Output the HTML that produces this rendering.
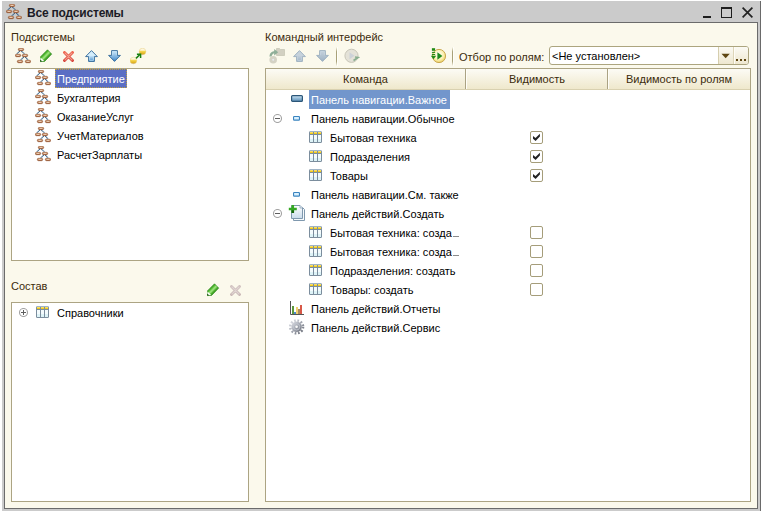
<!DOCTYPE html>
<html><head><meta charset="utf-8">
<style>
*{box-sizing:border-box}
html,body{margin:0;padding:0;width:762px;height:511px;overflow:hidden;background:#fff;font-family:"Liberation Sans",sans-serif;font-size:11px;color:#000}
.a{position:absolute}
.t{position:absolute;white-space:nowrap;line-height:13px}
#frame{left:2px;top:1px;width:758px;height:510px;background:#cbcbcb}
#frameR{left:760px;top:1px;width:1px;height:510px;background:#6a6a6a}
#panel{left:4px;top:22px;width:754px;height:487px;border:1px solid #6b6b6b;background:#fbf9ec}
.list{position:absolute;background:#fff;border:1px solid #aca483}
.hdr{position:absolute;top:69px;height:21px;background:linear-gradient(#fcfbf5,#efe8cc);border-bottom:1px solid #d9d1b0}
.sep{position:absolute;top:69px;width:1px;height:20px;background:#aaa283}
.sepl{position:absolute;top:69px;width:1px;height:20px;background:#fffef8}
.cb{position:absolute;width:13px;height:13px;border:1px solid #a59d7a;border-radius:2px;background:#fff}
</style></head><body>
<div class="a" id="frame"></div>
<div class="a" id="frameR"></div>
<div class="a" id="panel"></div>

<!-- title -->
<div class="t" style="left:27px;top:7px;font-weight:bold;font-size:12px;letter-spacing:-0.2px;color:#1b1b26">Все подсистемы</div>

<!-- window buttons -->
<div class="a" style="left:703px;top:16px;width:8px;height:2px;background:#1e1e1e"></div>
<div class="a" style="left:721px;top:7px;width:11px;height:11px;border:1px solid #1e1e1e;border-top-width:2px"></div>
<svg class="a" style="left:742px;top:7px" width="11" height="11" viewBox="0 0 11 11"><path d="M0.6 0.6L10.4 10.4M10.4 0.6L0.6 10.4" stroke="#222" stroke-width="1.7"/></svg>
<!-- left labels -->
<div class="t" style="left:11px;top:31px;color:#3b2b0b">Подсистемы</div>
<div class="list" style="left:11px;top:68px;width:238px;height:193px"></div>
<div class="t" style="left:11px;top:280px;color:#3b2b0b">Состав</div>
<div class="list" style="left:11px;top:302px;width:238px;height:200px"></div>

<!-- left list items -->
<div class="a" style="left:55px;top:69px;width:72px;height:19px;background:#5a6ec4;outline:1px dotted #c0a040;outline-offset:-1px"></div>
<div class="t" style="left:57px;top:73px;color:#fff">Предприятие</div>
<div class="t" style="left:57px;top:92px">Бухгалтерия</div>
<div class="t" style="left:57px;top:111px">ОказаниеУслуг</div>
<div class="t" style="left:57px;top:130px">УчетМатериалов</div>
<div class="t" style="left:57px;top:149px">РасчетЗарплаты</div>

<div class="t" style="left:57px;top:307px">Справочники</div>

<!-- right -->
<div class="t" style="left:265px;top:31px;color:#3b2b0b">Командный интерфейс</div>
<div class="a" style="left:336px;top:47px;width:1px;height:19px;background:linear-gradient(rgba(168,160,120,0),#a8a078 25%,#a8a078 75%,rgba(168,160,120,0))"></div>
<div class="a" style="left:337px;top:47px;width:1px;height:19px;background:#fffffa"></div>
<div class="a" style="left:452px;top:47px;width:1px;height:19px;background:linear-gradient(rgba(168,160,120,0),#a8a078 25%,#a8a078 75%,rgba(168,160,120,0))"></div>
<div class="a" style="left:453px;top:47px;width:1px;height:19px;background:#fffffa"></div>
<div class="t" style="left:459px;top:51px;color:#3b2b0b">Отбор по ролям:</div>
<div class="a" style="left:549px;top:46px;width:200px;height:19px;border:1px solid #aca57f;border-radius:3px;background:#fff;overflow:hidden">
<div class="a" style="left:168px;top:0;width:31px;height:17px;background:linear-gradient(#fbfaf4,#eee7cf)"></div>
<div class="a" style="left:168px;top:0;width:1px;height:17px;background:#d6ceae"></div>
<div class="a" style="left:183px;top:0;width:1px;height:17px;background:#ddd5b8"></div>
<div class="a" style="left:184px;top:0;width:1px;height:17px;background:#fffdf6"></div>
</div>
<svg class="a" style="left:721px;top:53px" width="10" height="6" viewBox="0 0 10 6"><path d="M0.5 0.8H8.8L4.65 5.2Z" fill="#5e4612"/></svg>
<div class="a" style="left:736px;top:59px;width:2px;height:2px;background:#5e4612"></div>
<div class="a" style="left:740px;top:59px;width:2px;height:2px;background:#5e4612"></div>
<div class="a" style="left:744px;top:59px;width:2px;height:2px;background:#5e4612"></div>
<div class="t" style="left:552px;top:50px">&lt;Не установлен&gt;</div>

<div class="list" style="left:265px;top:68px;width:486px;height:434px"></div>
<div class="hdr" style="left:266px;width:484px"></div>
<div class="sep" style="left:465px"></div>
<div class="sepl" style="left:466px"></div>
<div class="sep" style="left:607px"></div>
<div class="sepl" style="left:608px"></div>
<div class="t" style="left:343px;top:73px;color:#3b2b0b">Команда</div>
<div class="t" style="left:509px;top:73px;color:#3b2b0b">Видимость</div>
<div class="t" style="left:626px;top:73px;color:#3b2b0b">Видимость по ролям</div>

<div class="a" style="left:309px;top:90px;width:141px;height:19px;background:#7296cc"></div>
<div class="t" style="left:311px;top:94px;color:#fff">Панель навигации.Важное</div>
<div class="t" style="left:311px;top:113px">Панель навигации.Обычное</div>
<div class="t" style="left:330px;top:132px">Бытовая техника</div>
<div class="t" style="left:330px;top:151px">Подразделения</div>
<div class="t" style="left:330px;top:170px">Товары</div>
<div class="t" style="left:311px;top:189px">Панель навигации.См. также</div>
<div class="t" style="left:311px;top:208px">Панель действий.Создать</div>
<div class="t" style="left:330px;top:227px">Бытовая техника: созда</div>
<div class="a" style="left:453px;top:236px;width:6px;height:1px;background:#8c8c8c"></div>
<div class="t" style="left:330px;top:246px">Бытовая техника: созда</div>
<div class="a" style="left:453px;top:255px;width:6px;height:1px;background:#8c8c8c"></div>
<div class="t" style="left:330px;top:265px">Подразделения: создать</div>
<div class="t" style="left:330px;top:284px">Товары: создать</div>
<div class="t" style="left:311px;top:303px">Панель действий.Отчеты</div>
<div class="t" style="left:311px;top:322px">Панель действий.Сервис</div>


<svg class="a" style="left:6px;top:4px" width="16" height="16" viewBox="0 0 16 16"><defs><linearGradient id="ovg" x1="0" y1="0" x2="0" y2="1"><stop offset="0" stop-color="#e0aa80"/><stop offset="1" stop-color="#a5643a"/></linearGradient></defs><g stroke="#2f5f88" stroke-width="1.15" stroke-dasharray="1.2,0.45" fill="none"><path d="M4.8 2.9L1.9 5.9M6.4 2.9L9.3 5.9M8.7 9L5.8 12M10.3 9L13 12"/></g><rect x="3.35" y="0.35" width="5.3" height="2.3" rx="1.15" fill="url(#ovg)" stroke="#8c4c28" stroke-width="0.7"/><path d="M4.6 1.35H7.4" stroke="#fff2e4" stroke-width="0.75"/><rect x="0.35" y="6.35" width="5.3" height="2.3" rx="1.15" fill="url(#ovg)" stroke="#8c4c28" stroke-width="0.7"/><path d="M1.6 7.35H4.4" stroke="#fff2e4" stroke-width="0.75"/><rect x="7.35" y="6.35" width="5.3" height="2.3" rx="1.15" fill="url(#ovg)" stroke="#8c4c28" stroke-width="0.7"/><path d="M8.6 7.35H11.4" stroke="#fff2e4" stroke-width="0.75"/><rect x="2.35" y="12.35" width="5.3" height="2.3" rx="1.15" fill="url(#ovg)" stroke="#8c4c28" stroke-width="0.7"/><path d="M3.6 13.35H6.4" stroke="#fff2e4" stroke-width="0.75"/><rect x="10.35" y="12.35" width="5.3" height="2.3" rx="1.15" fill="url(#ovg)" stroke="#8c4c28" stroke-width="0.7"/><path d="M11.6 13.35H14.4" stroke="#fff2e4" stroke-width="0.75"/></svg><svg class="a" style="left:15px;top:48px" width="16" height="16" viewBox="0 0 16 16"><defs><linearGradient id="ovg" x1="0" y1="0" x2="0" y2="1"><stop offset="0" stop-color="#e0aa80"/><stop offset="1" stop-color="#a5643a"/></linearGradient></defs><g stroke="#2f5f88" stroke-width="1.15" stroke-dasharray="1.2,0.45" fill="none"><path d="M4.8 2.9L1.9 5.9M6.4 2.9L9.3 5.9M8.7 9L5.8 12M10.3 9L13 12"/></g><rect x="3.35" y="0.35" width="5.3" height="2.3" rx="1.15" fill="url(#ovg)" stroke="#8c4c28" stroke-width="0.7"/><path d="M4.6 1.35H7.4" stroke="#fff2e4" stroke-width="0.75"/><rect x="0.35" y="6.35" width="5.3" height="2.3" rx="1.15" fill="url(#ovg)" stroke="#8c4c28" stroke-width="0.7"/><path d="M1.6 7.35H4.4" stroke="#fff2e4" stroke-width="0.75"/><rect x="7.35" y="6.35" width="5.3" height="2.3" rx="1.15" fill="url(#ovg)" stroke="#8c4c28" stroke-width="0.7"/><path d="M8.6 7.35H11.4" stroke="#fff2e4" stroke-width="0.75"/><rect x="2.35" y="12.35" width="5.3" height="2.3" rx="1.15" fill="url(#ovg)" stroke="#8c4c28" stroke-width="0.7"/><path d="M3.6 13.35H6.4" stroke="#fff2e4" stroke-width="0.75"/><rect x="10.35" y="12.35" width="5.3" height="2.3" rx="1.15" fill="url(#ovg)" stroke="#8c4c28" stroke-width="0.7"/><path d="M11.6 13.35H14.4" stroke="#fff2e4" stroke-width="0.75"/></svg><svg class="a" style="left:40px;top:49px" width="13" height="14" viewBox="0 0 13 14"><defs><linearGradient id="pg" x1="0" y1="0" x2="1" y2="1"><stop offset="0" stop-color="#1c7a0e"/><stop offset="0.38" stop-color="#4cb42c"/><stop offset="0.5" stop-color="#a4ea84"/><stop offset="0.62" stop-color="#44a826"/><stop offset="1" stop-color="#176a0a"/></linearGradient></defs><path d="M0 12.6L0.3 8L7.5 0.8L11.7 5.1L4.6 12.4Z" fill="url(#pg)" stroke="#1f7a10" stroke-width="0.6" stroke-linejoin="round"/><path d="M0.3 12.3L0.5 8.4L4.2 12.1Z" fill="#fff"/><path d="M0 12.6L0.25 10.4L2.3 12.4Z" fill="#15500a"/></svg><svg class="a" style="left:63px;top:51px" width="11" height="11" viewBox="0 0 11 11"><defs><linearGradient id="xg" x1="0" y1="0" x2="0" y2="11" gradientUnits="userSpaceOnUse"><stop offset="0" stop-color="#f0664e"/><stop offset="1" stop-color="#d23a32"/></linearGradient></defs><path d="M1.5 1.5L9.5 9.5M9.5 1.5L1.5 9.5" stroke="url(#xg)" stroke-width="2.9" stroke-linecap="round"/><path d="M2 2L9 9M9 2L2 9" stroke="#f9b4a4" stroke-width="1.1" stroke-linecap="round" opacity="0.75"/></svg><svg class="a" style="left:85px;top:50px" width="13" height="12" viewBox="0 0 13 12"><defs><linearGradient id="au" x1="0" y1="0" x2="0" y2="1"><stop offset="0" stop-color="#d4eefc"/><stop offset="0.45" stop-color="#d4eefc"/><stop offset="1" stop-color="#3f87c9"/></linearGradient></defs><path d="M6.5 0.6L12.4 6.6H9.4V11.4H3.6V6.6H0.6Z" fill="url(#au)" stroke="#2e6596" stroke-width="0.9" stroke-linejoin="round"/><path d="M4.6 6.8V10.4H8.4V6.8" stroke="#c4e6fa" stroke-width="0.7" fill="none"/></svg><svg class="a" style="left:108px;top:50px" width="13" height="12" viewBox="0 0 13 12"><defs><linearGradient id="ad" x1="0" y1="0" x2="0" y2="1"><stop offset="0" stop-color="#d4eefc"/><stop offset="1" stop-color="#3f87c9"/></linearGradient></defs><path d="M6.5 11.4L12.4 5.4H9.4V0.6H3.6V5.4H0.6Z" fill="url(#ad)" stroke="#2e6596" stroke-width="0.9" stroke-linejoin="round"/><path d="M4.6 5.2V1.6H8.4V5.2" stroke="#c4e6fa" stroke-width="0.7" fill="none"/></svg><svg class="a" style="left:130px;top:48px" width="17" height="17" viewBox="0 0 17 17"><defs><linearGradient id="yb" x1="0" y1="0" x2="0" y2="1"><stop offset="0" stop-color="#fbf4d8"/><stop offset="0.3" stop-color="#fff9e0"/><stop offset="0.45" stop-color="#f6d850"/><stop offset="0.8" stop-color="#e2b424"/><stop offset="1" stop-color="#b89060"/></linearGradient></defs><circle cx="3.4" cy="12.5" r="3.3" fill="url(#yb)" stroke="#e4c870" stroke-width="0.4"/><circle cx="12.5" cy="3.5" r="3.3" fill="url(#yb)" stroke="#e4c870" stroke-width="0.4"/><path d="M6 10.4L10.4 6" stroke="#18800f" stroke-width="1.5"/><path d="M6.9 6.2H10.6V9.9" stroke="#18800f" stroke-width="1.5" fill="none"/></svg><svg class="a" style="left:35px;top:70px" width="16" height="16" viewBox="0 0 16 16"><defs><linearGradient id="ovg" x1="0" y1="0" x2="0" y2="1"><stop offset="0" stop-color="#e0aa80"/><stop offset="1" stop-color="#a5643a"/></linearGradient></defs><g stroke="#2f5f88" stroke-width="1.15" stroke-dasharray="1.2,0.45" fill="none"><path d="M4.8 2.9L1.9 5.9M6.4 2.9L9.3 5.9M8.7 9L5.8 12M10.3 9L13 12"/></g><rect x="3.35" y="0.35" width="5.3" height="2.3" rx="1.15" fill="url(#ovg)" stroke="#8c4c28" stroke-width="0.7"/><path d="M4.6 1.35H7.4" stroke="#fff2e4" stroke-width="0.75"/><rect x="0.35" y="6.35" width="5.3" height="2.3" rx="1.15" fill="url(#ovg)" stroke="#8c4c28" stroke-width="0.7"/><path d="M1.6 7.35H4.4" stroke="#fff2e4" stroke-width="0.75"/><rect x="7.35" y="6.35" width="5.3" height="2.3" rx="1.15" fill="url(#ovg)" stroke="#8c4c28" stroke-width="0.7"/><path d="M8.6 7.35H11.4" stroke="#fff2e4" stroke-width="0.75"/><rect x="2.35" y="12.35" width="5.3" height="2.3" rx="1.15" fill="url(#ovg)" stroke="#8c4c28" stroke-width="0.7"/><path d="M3.6 13.35H6.4" stroke="#fff2e4" stroke-width="0.75"/><rect x="10.35" y="12.35" width="5.3" height="2.3" rx="1.15" fill="url(#ovg)" stroke="#8c4c28" stroke-width="0.7"/><path d="M11.6 13.35H14.4" stroke="#fff2e4" stroke-width="0.75"/></svg><svg class="a" style="left:35px;top:89px" width="16" height="16" viewBox="0 0 16 16"><defs><linearGradient id="ovg" x1="0" y1="0" x2="0" y2="1"><stop offset="0" stop-color="#e0aa80"/><stop offset="1" stop-color="#a5643a"/></linearGradient></defs><g stroke="#2f5f88" stroke-width="1.15" stroke-dasharray="1.2,0.45" fill="none"><path d="M4.8 2.9L1.9 5.9M6.4 2.9L9.3 5.9M8.7 9L5.8 12M10.3 9L13 12"/></g><rect x="3.35" y="0.35" width="5.3" height="2.3" rx="1.15" fill="url(#ovg)" stroke="#8c4c28" stroke-width="0.7"/><path d="M4.6 1.35H7.4" stroke="#fff2e4" stroke-width="0.75"/><rect x="0.35" y="6.35" width="5.3" height="2.3" rx="1.15" fill="url(#ovg)" stroke="#8c4c28" stroke-width="0.7"/><path d="M1.6 7.35H4.4" stroke="#fff2e4" stroke-width="0.75"/><rect x="7.35" y="6.35" width="5.3" height="2.3" rx="1.15" fill="url(#ovg)" stroke="#8c4c28" stroke-width="0.7"/><path d="M8.6 7.35H11.4" stroke="#fff2e4" stroke-width="0.75"/><rect x="2.35" y="12.35" width="5.3" height="2.3" rx="1.15" fill="url(#ovg)" stroke="#8c4c28" stroke-width="0.7"/><path d="M3.6 13.35H6.4" stroke="#fff2e4" stroke-width="0.75"/><rect x="10.35" y="12.35" width="5.3" height="2.3" rx="1.15" fill="url(#ovg)" stroke="#8c4c28" stroke-width="0.7"/><path d="M11.6 13.35H14.4" stroke="#fff2e4" stroke-width="0.75"/></svg><svg class="a" style="left:35px;top:108px" width="16" height="16" viewBox="0 0 16 16"><defs><linearGradient id="ovg" x1="0" y1="0" x2="0" y2="1"><stop offset="0" stop-color="#e0aa80"/><stop offset="1" stop-color="#a5643a"/></linearGradient></defs><g stroke="#2f5f88" stroke-width="1.15" stroke-dasharray="1.2,0.45" fill="none"><path d="M4.8 2.9L1.9 5.9M6.4 2.9L9.3 5.9M8.7 9L5.8 12M10.3 9L13 12"/></g><rect x="3.35" y="0.35" width="5.3" height="2.3" rx="1.15" fill="url(#ovg)" stroke="#8c4c28" stroke-width="0.7"/><path d="M4.6 1.35H7.4" stroke="#fff2e4" stroke-width="0.75"/><rect x="0.35" y="6.35" width="5.3" height="2.3" rx="1.15" fill="url(#ovg)" stroke="#8c4c28" stroke-width="0.7"/><path d="M1.6 7.35H4.4" stroke="#fff2e4" stroke-width="0.75"/><rect x="7.35" y="6.35" width="5.3" height="2.3" rx="1.15" fill="url(#ovg)" stroke="#8c4c28" stroke-width="0.7"/><path d="M8.6 7.35H11.4" stroke="#fff2e4" stroke-width="0.75"/><rect x="2.35" y="12.35" width="5.3" height="2.3" rx="1.15" fill="url(#ovg)" stroke="#8c4c28" stroke-width="0.7"/><path d="M3.6 13.35H6.4" stroke="#fff2e4" stroke-width="0.75"/><rect x="10.35" y="12.35" width="5.3" height="2.3" rx="1.15" fill="url(#ovg)" stroke="#8c4c28" stroke-width="0.7"/><path d="M11.6 13.35H14.4" stroke="#fff2e4" stroke-width="0.75"/></svg><svg class="a" style="left:35px;top:127px" width="16" height="16" viewBox="0 0 16 16"><defs><linearGradient id="ovg" x1="0" y1="0" x2="0" y2="1"><stop offset="0" stop-color="#e0aa80"/><stop offset="1" stop-color="#a5643a"/></linearGradient></defs><g stroke="#2f5f88" stroke-width="1.15" stroke-dasharray="1.2,0.45" fill="none"><path d="M4.8 2.9L1.9 5.9M6.4 2.9L9.3 5.9M8.7 9L5.8 12M10.3 9L13 12"/></g><rect x="3.35" y="0.35" width="5.3" height="2.3" rx="1.15" fill="url(#ovg)" stroke="#8c4c28" stroke-width="0.7"/><path d="M4.6 1.35H7.4" stroke="#fff2e4" stroke-width="0.75"/><rect x="0.35" y="6.35" width="5.3" height="2.3" rx="1.15" fill="url(#ovg)" stroke="#8c4c28" stroke-width="0.7"/><path d="M1.6 7.35H4.4" stroke="#fff2e4" stroke-width="0.75"/><rect x="7.35" y="6.35" width="5.3" height="2.3" rx="1.15" fill="url(#ovg)" stroke="#8c4c28" stroke-width="0.7"/><path d="M8.6 7.35H11.4" stroke="#fff2e4" stroke-width="0.75"/><rect x="2.35" y="12.35" width="5.3" height="2.3" rx="1.15" fill="url(#ovg)" stroke="#8c4c28" stroke-width="0.7"/><path d="M3.6 13.35H6.4" stroke="#fff2e4" stroke-width="0.75"/><rect x="10.35" y="12.35" width="5.3" height="2.3" rx="1.15" fill="url(#ovg)" stroke="#8c4c28" stroke-width="0.7"/><path d="M11.6 13.35H14.4" stroke="#fff2e4" stroke-width="0.75"/></svg><svg class="a" style="left:35px;top:146px" width="16" height="16" viewBox="0 0 16 16"><defs><linearGradient id="ovg" x1="0" y1="0" x2="0" y2="1"><stop offset="0" stop-color="#e0aa80"/><stop offset="1" stop-color="#a5643a"/></linearGradient></defs><g stroke="#2f5f88" stroke-width="1.15" stroke-dasharray="1.2,0.45" fill="none"><path d="M4.8 2.9L1.9 5.9M6.4 2.9L9.3 5.9M8.7 9L5.8 12M10.3 9L13 12"/></g><rect x="3.35" y="0.35" width="5.3" height="2.3" rx="1.15" fill="url(#ovg)" stroke="#8c4c28" stroke-width="0.7"/><path d="M4.6 1.35H7.4" stroke="#fff2e4" stroke-width="0.75"/><rect x="0.35" y="6.35" width="5.3" height="2.3" rx="1.15" fill="url(#ovg)" stroke="#8c4c28" stroke-width="0.7"/><path d="M1.6 7.35H4.4" stroke="#fff2e4" stroke-width="0.75"/><rect x="7.35" y="6.35" width="5.3" height="2.3" rx="1.15" fill="url(#ovg)" stroke="#8c4c28" stroke-width="0.7"/><path d="M8.6 7.35H11.4" stroke="#fff2e4" stroke-width="0.75"/><rect x="2.35" y="12.35" width="5.3" height="2.3" rx="1.15" fill="url(#ovg)" stroke="#8c4c28" stroke-width="0.7"/><path d="M3.6 13.35H6.4" stroke="#fff2e4" stroke-width="0.75"/><rect x="10.35" y="12.35" width="5.3" height="2.3" rx="1.15" fill="url(#ovg)" stroke="#8c4c28" stroke-width="0.7"/><path d="M11.6 13.35H14.4" stroke="#fff2e4" stroke-width="0.75"/></svg><svg class="a" style="left:207px;top:283px" width="13" height="14" viewBox="0 0 13 14"><defs><linearGradient id="pg" x1="0" y1="0" x2="1" y2="1"><stop offset="0" stop-color="#1c7a0e"/><stop offset="0.38" stop-color="#4cb42c"/><stop offset="0.5" stop-color="#a4ea84"/><stop offset="0.62" stop-color="#44a826"/><stop offset="1" stop-color="#176a0a"/></linearGradient></defs><path d="M0 12.6L0.3 8L7.5 0.8L11.7 5.1L4.6 12.4Z" fill="url(#pg)" stroke="#1f7a10" stroke-width="0.6" stroke-linejoin="round"/><path d="M0.3 12.3L0.5 8.4L4.2 12.1Z" fill="#fff"/><path d="M0 12.6L0.25 10.4L2.3 12.4Z" fill="#15500a"/></svg><svg class="a" style="left:264px;top:44px" width="22" height="20" viewBox="0 0 22 20"><path d="M12.5 4.5H15.5L16.5 5.5H20.5V11.5H12.5Z" fill="#d2d0c2" stroke="#c8c6b6" stroke-width="0.8"/><path d="M6.5 12.5C6.8 9.8 8.5 8.4 11 8.2" stroke="#8fae98" stroke-width="2.2" fill="none"/><path d="M10.2 5L14.2 8.2L10.2 11.4Z" fill="#8fae98"/><circle cx="9.2" cy="15.8" r="3.8" fill="#d4d2c4"/><circle cx="9.2" cy="15.8" r="1" fill="#e8eaf2"/></svg><svg class="a" style="left:293px;top:50px" width="13" height="12" viewBox="0 0 13 12"><defs><linearGradient id="au2" x1="0" y1="0" x2="0" y2="1"><stop offset="0" stop-color="#c6d2dc"/><stop offset="0.45" stop-color="#c6d2dc"/><stop offset="1" stop-color="#9fb2c4"/></linearGradient></defs><path d="M6.5 0.6L12.4 6.6H9.4V11.4H3.6V6.6H0.6Z" fill="url(#au2)" stroke="#9aaebe" stroke-width="0.9" stroke-linejoin="round"/><path d="M4.6 6.8V10.4H8.4V6.8" stroke="#c8d6e2" stroke-width="0.7" fill="none"/></svg><svg class="a" style="left:316px;top:50px" width="13" height="12" viewBox="0 0 13 12"><defs><linearGradient id="ad2" x1="0" y1="0" x2="0" y2="1"><stop offset="0" stop-color="#c6d2dc"/><stop offset="1" stop-color="#9fb2c4"/></linearGradient></defs><path d="M6.5 11.4L12.4 5.4H9.4V0.6H3.6V5.4H0.6Z" fill="url(#ad2)" stroke="#9aaebe" stroke-width="0.9" stroke-linejoin="round"/><path d="M4.6 5.2V1.6H8.4V5.2" stroke="#c8d6e2" stroke-width="0.7" fill="none"/></svg><svg class="a" style="left:344px;top:48px" width="16" height="16" viewBox="0 0 16 16"><circle cx="7.5" cy="7.8" r="6.6" fill="#e4e2d8" stroke="#c8c6b8" stroke-width="1"/><path d="M5.5 4.3L10.5 7.8L5.5 11.3Z" fill="#cdd2d8"/><path d="M9.5 12.5L14 9.5L11 9" stroke="#8aae90" stroke-width="1.6" fill="none"/></svg><svg class="a" style="left:425px;top:48px" width="22" height="16" viewBox="0 0 22 16"><defs><radialGradient id="cp" cx="0.45" cy="0.4" r="0.65"><stop offset="0" stop-color="#ffffff"/><stop offset="0.6" stop-color="#fbf0b0"/><stop offset="1" stop-color="#e8c850"/></radialGradient></defs><circle cx="14" cy="8" r="6.6" fill="url(#cp)" stroke="#c9a850" stroke-width="1"/><path d="M12.4 4.3L17.4 8L12.4 11.7Z" fill="#1f8a1f"/><rect x="6.9" y="0.2" width="3.2" height="2.6" fill="#218a14"/><rect x="6.9" y="3.9" width="3.2" height="1" fill="#218a14"/><rect x="6.9" y="6" width="3.2" height="1" fill="#218a14"/><path d="M5.8 7.8H11.2L8.5 11.2Z" fill="#218a14"/></svg><svg class="a" style="left:291px;top:95px" width="12" height="7" viewBox="0 0 12 7"><defs><linearGradient id="nb" x1="0" y1="0" x2="0" y2="1"><stop offset="0" stop-color="#d6eaf6"/><stop offset="0.5" stop-color="#8fb8d6"/><stop offset="1" stop-color="#5d8db4"/></linearGradient></defs><rect x="0.6" y="0.6" width="10.8" height="5.8" rx="1" fill="url(#nb)" stroke="#2b5678" stroke-width="1.2"/></svg><svg class="a" style="left:293px;top:116px" width="7" height="5" viewBox="0 0 7 5"><rect x="0.55" y="0.55" width="5.9" height="3.6" rx="0.7" fill="#d9f1ff" stroke="#3b84bf" stroke-width="1.1"/></svg><svg class="a" style="left:293px;top:192px" width="7" height="5" viewBox="0 0 7 5"><rect x="0.55" y="0.55" width="5.9" height="3.6" rx="0.7" fill="#d9f1ff" stroke="#3b84bf" stroke-width="1.1"/></svg><svg class="a" style="left:288px;top:204px" width="18" height="18" viewBox="0 0 18 18"><defs><linearGradient id="dg" x1="0" y1="0" x2="0" y2="1"><stop offset="0" stop-color="#ffffff"/><stop offset="1" stop-color="#cadcec"/></linearGradient></defs><path d="M5.5 3.5H14.5L16.5 5.5V16.5H5.5Z" fill="#f6f9fc" stroke="#7f98ae" stroke-width="1"/><path d="M3.5 1.5H12L14.5 4V14.5H3.5Z" fill="url(#dg)" stroke="#7f98ae" stroke-width="1"/><path d="M12 1.5V4H14.5" fill="#e4edf5" stroke="#8fa6ba" stroke-width="0.8"/><path d="M0.8 5H8.8M4.8 1V9" stroke="#34a822" stroke-width="2.5"/><path d="M4.8 6.3V9" stroke="#15650a" stroke-width="2.5"/></svg><svg class="a" style="left:290px;top:301px" width="15" height="15" viewBox="0 0 15 15"><rect x="2" y="5" width="2" height="8" fill="#5c9a3c"/><rect x="4" y="11" width="2" height="2" fill="#4a8ad0"/><rect x="6" y="6" width="2" height="7" fill="#f0d070"/><rect x="8" y="8" width="2" height="5" fill="#a88a60"/><rect x="10" y="4" width="2" height="9" fill="#d85848"/><path d="M0.5 0V13.5H14" stroke="#555" stroke-width="1" fill="none"/></svg><svg class="a" style="left:289px;top:319px" width="16" height="16" viewBox="0 0 16 16"><defs><linearGradient id="gg" x1="0" y1="0" x2="1" y2="1"><stop offset="0" stop-color="#e2e4ea"/><stop offset="0.5" stop-color="#a4a8b2"/><stop offset="1" stop-color="#6a6e78"/></linearGradient></defs><circle cx="7.6" cy="7.8" r="6.4" fill="none" stroke="url(#gg)" stroke-width="2.6" stroke-dasharray="1.7,1.65"/><circle cx="7.6" cy="7.8" r="5.2" fill="url(#gg)"/><circle cx="7.6" cy="7.8" r="3.2" fill="none" stroke="#c4c8d0" stroke-width="0.8"/><circle cx="7.6" cy="7.8" r="1.3" fill="#fafafa"/></svg><svg class="a" style="left:230px;top:285px" width="11" height="11" viewBox="0 0 11 11"><defs><linearGradient id="xg2" x1="0" y1="0" x2="0" y2="11" gradientUnits="userSpaceOnUse"><stop offset="0" stop-color="#d2c4c2"/><stop offset="1" stop-color="#c8b6b4"/></linearGradient></defs><path d="M1.5 1.5L9.5 9.5M9.5 1.5L1.5 9.5" stroke="url(#xg2)" stroke-width="2.9" stroke-linecap="round"/><path d="M2 2L9 9M9 2L2 9" stroke="#e6dcda" stroke-width="1.1" stroke-linecap="round" opacity="0.75"/></svg><svg class="a" style="left:19px;top:308px" width="9" height="9" viewBox="0 0 9 9"><circle cx="4.5" cy="4.5" r="4" fill="#fff" stroke="#a4a4a4" stroke-width="1.1"/><path d="M2 4.5H7M4.5 2V7" stroke="#5e5e5e" stroke-width="1"/></svg><svg class="a" style="left:36px;top:306px" width="13" height="12" viewBox="0 0 13 12"><rect x="0" y="0" width="13" height="12" rx="1.5" fill="#7b8d9d"/><rect x="1" y="0" width="11" height="1" fill="#9fb4c6"/><rect x="1" y="1" width="3" height="2" fill="#f4cc1a"/><rect x="1" y="1" width="3" height="0.8" fill="#fbe27a"/><rect x="1" y="4" width="3" height="7" fill="#f4fbfd"/><rect x="1" y="8" width="3" height="3" fill="#def3f7"/><rect x="5" y="1" width="3" height="2" fill="#f4cc1a"/><rect x="5" y="1" width="3" height="0.8" fill="#fbe27a"/><rect x="5" y="4" width="3" height="7" fill="#f4fbfd"/><rect x="5" y="8" width="3" height="3" fill="#def3f7"/><rect x="9" y="1" width="3" height="2" fill="#f4cc1a"/><rect x="9" y="1" width="3" height="0.8" fill="#fbe27a"/><rect x="9" y="4" width="3" height="7" fill="#f4fbfd"/><rect x="9" y="8" width="3" height="3" fill="#def3f7"/></svg><svg class="a" style="left:273px;top:114px" width="9" height="9" viewBox="0 0 9 9"><circle cx="4.5" cy="4.5" r="4" fill="#fff" stroke="#a4a4a4" stroke-width="1.1"/><path d="M2 4.5H7" stroke="#5e5e5e" stroke-width="1"/></svg><svg class="a" style="left:273px;top:209px" width="9" height="9" viewBox="0 0 9 9"><circle cx="4.5" cy="4.5" r="4" fill="#fff" stroke="#a4a4a4" stroke-width="1.1"/><path d="M2 4.5H7" stroke="#5e5e5e" stroke-width="1"/></svg><svg class="a" style="left:309px;top:131px" width="13" height="12" viewBox="0 0 13 12"><rect x="0" y="0" width="13" height="12" rx="1.5" fill="#7b8d9d"/><rect x="1" y="0" width="11" height="1" fill="#9fb4c6"/><rect x="1" y="1" width="3" height="2" fill="#f4cc1a"/><rect x="1" y="1" width="3" height="0.8" fill="#fbe27a"/><rect x="1" y="4" width="3" height="7" fill="#f4fbfd"/><rect x="1" y="8" width="3" height="3" fill="#def3f7"/><rect x="5" y="1" width="3" height="2" fill="#f4cc1a"/><rect x="5" y="1" width="3" height="0.8" fill="#fbe27a"/><rect x="5" y="4" width="3" height="7" fill="#f4fbfd"/><rect x="5" y="8" width="3" height="3" fill="#def3f7"/><rect x="9" y="1" width="3" height="2" fill="#f4cc1a"/><rect x="9" y="1" width="3" height="0.8" fill="#fbe27a"/><rect x="9" y="4" width="3" height="7" fill="#f4fbfd"/><rect x="9" y="8" width="3" height="3" fill="#def3f7"/></svg><svg class="a" style="left:309px;top:150px" width="13" height="12" viewBox="0 0 13 12"><rect x="0" y="0" width="13" height="12" rx="1.5" fill="#7b8d9d"/><rect x="1" y="0" width="11" height="1" fill="#9fb4c6"/><rect x="1" y="1" width="3" height="2" fill="#f4cc1a"/><rect x="1" y="1" width="3" height="0.8" fill="#fbe27a"/><rect x="1" y="4" width="3" height="7" fill="#f4fbfd"/><rect x="1" y="8" width="3" height="3" fill="#def3f7"/><rect x="5" y="1" width="3" height="2" fill="#f4cc1a"/><rect x="5" y="1" width="3" height="0.8" fill="#fbe27a"/><rect x="5" y="4" width="3" height="7" fill="#f4fbfd"/><rect x="5" y="8" width="3" height="3" fill="#def3f7"/><rect x="9" y="1" width="3" height="2" fill="#f4cc1a"/><rect x="9" y="1" width="3" height="0.8" fill="#fbe27a"/><rect x="9" y="4" width="3" height="7" fill="#f4fbfd"/><rect x="9" y="8" width="3" height="3" fill="#def3f7"/></svg><svg class="a" style="left:309px;top:169px" width="13" height="12" viewBox="0 0 13 12"><rect x="0" y="0" width="13" height="12" rx="1.5" fill="#7b8d9d"/><rect x="1" y="0" width="11" height="1" fill="#9fb4c6"/><rect x="1" y="1" width="3" height="2" fill="#f4cc1a"/><rect x="1" y="1" width="3" height="0.8" fill="#fbe27a"/><rect x="1" y="4" width="3" height="7" fill="#f4fbfd"/><rect x="1" y="8" width="3" height="3" fill="#def3f7"/><rect x="5" y="1" width="3" height="2" fill="#f4cc1a"/><rect x="5" y="1" width="3" height="0.8" fill="#fbe27a"/><rect x="5" y="4" width="3" height="7" fill="#f4fbfd"/><rect x="5" y="8" width="3" height="3" fill="#def3f7"/><rect x="9" y="1" width="3" height="2" fill="#f4cc1a"/><rect x="9" y="1" width="3" height="0.8" fill="#fbe27a"/><rect x="9" y="4" width="3" height="7" fill="#f4fbfd"/><rect x="9" y="8" width="3" height="3" fill="#def3f7"/></svg><svg class="a" style="left:309px;top:226px" width="13" height="12" viewBox="0 0 13 12"><rect x="0" y="0" width="13" height="12" rx="1.5" fill="#7b8d9d"/><rect x="1" y="0" width="11" height="1" fill="#9fb4c6"/><rect x="1" y="1" width="3" height="2" fill="#f4cc1a"/><rect x="1" y="1" width="3" height="0.8" fill="#fbe27a"/><rect x="1" y="4" width="3" height="7" fill="#f4fbfd"/><rect x="1" y="8" width="3" height="3" fill="#def3f7"/><rect x="5" y="1" width="3" height="2" fill="#f4cc1a"/><rect x="5" y="1" width="3" height="0.8" fill="#fbe27a"/><rect x="5" y="4" width="3" height="7" fill="#f4fbfd"/><rect x="5" y="8" width="3" height="3" fill="#def3f7"/><rect x="9" y="1" width="3" height="2" fill="#f4cc1a"/><rect x="9" y="1" width="3" height="0.8" fill="#fbe27a"/><rect x="9" y="4" width="3" height="7" fill="#f4fbfd"/><rect x="9" y="8" width="3" height="3" fill="#def3f7"/></svg><svg class="a" style="left:309px;top:245px" width="13" height="12" viewBox="0 0 13 12"><rect x="0" y="0" width="13" height="12" rx="1.5" fill="#7b8d9d"/><rect x="1" y="0" width="11" height="1" fill="#9fb4c6"/><rect x="1" y="1" width="3" height="2" fill="#f4cc1a"/><rect x="1" y="1" width="3" height="0.8" fill="#fbe27a"/><rect x="1" y="4" width="3" height="7" fill="#f4fbfd"/><rect x="1" y="8" width="3" height="3" fill="#def3f7"/><rect x="5" y="1" width="3" height="2" fill="#f4cc1a"/><rect x="5" y="1" width="3" height="0.8" fill="#fbe27a"/><rect x="5" y="4" width="3" height="7" fill="#f4fbfd"/><rect x="5" y="8" width="3" height="3" fill="#def3f7"/><rect x="9" y="1" width="3" height="2" fill="#f4cc1a"/><rect x="9" y="1" width="3" height="0.8" fill="#fbe27a"/><rect x="9" y="4" width="3" height="7" fill="#f4fbfd"/><rect x="9" y="8" width="3" height="3" fill="#def3f7"/></svg><svg class="a" style="left:309px;top:264px" width="13" height="12" viewBox="0 0 13 12"><rect x="0" y="0" width="13" height="12" rx="1.5" fill="#7b8d9d"/><rect x="1" y="0" width="11" height="1" fill="#9fb4c6"/><rect x="1" y="1" width="3" height="2" fill="#f4cc1a"/><rect x="1" y="1" width="3" height="0.8" fill="#fbe27a"/><rect x="1" y="4" width="3" height="7" fill="#f4fbfd"/><rect x="1" y="8" width="3" height="3" fill="#def3f7"/><rect x="5" y="1" width="3" height="2" fill="#f4cc1a"/><rect x="5" y="1" width="3" height="0.8" fill="#fbe27a"/><rect x="5" y="4" width="3" height="7" fill="#f4fbfd"/><rect x="5" y="8" width="3" height="3" fill="#def3f7"/><rect x="9" y="1" width="3" height="2" fill="#f4cc1a"/><rect x="9" y="1" width="3" height="0.8" fill="#fbe27a"/><rect x="9" y="4" width="3" height="7" fill="#f4fbfd"/><rect x="9" y="8" width="3" height="3" fill="#def3f7"/></svg><svg class="a" style="left:309px;top:283px" width="13" height="12" viewBox="0 0 13 12"><rect x="0" y="0" width="13" height="12" rx="1.5" fill="#7b8d9d"/><rect x="1" y="0" width="11" height="1" fill="#9fb4c6"/><rect x="1" y="1" width="3" height="2" fill="#f4cc1a"/><rect x="1" y="1" width="3" height="0.8" fill="#fbe27a"/><rect x="1" y="4" width="3" height="7" fill="#f4fbfd"/><rect x="1" y="8" width="3" height="3" fill="#def3f7"/><rect x="5" y="1" width="3" height="2" fill="#f4cc1a"/><rect x="5" y="1" width="3" height="0.8" fill="#fbe27a"/><rect x="5" y="4" width="3" height="7" fill="#f4fbfd"/><rect x="5" y="8" width="3" height="3" fill="#def3f7"/><rect x="9" y="1" width="3" height="2" fill="#f4cc1a"/><rect x="9" y="1" width="3" height="0.8" fill="#fbe27a"/><rect x="9" y="4" width="3" height="7" fill="#f4fbfd"/><rect x="9" y="8" width="3" height="3" fill="#def3f7"/></svg><div class="cb" style="left:530px;top:131px"></div><svg class="a" style="left:530px;top:131px" width="13" height="13" viewBox="0 0 13 13"><path d="M3 5L5.5 7.1L9.9 2.8V5.6L5.6 9.9L3 7.7Z" fill="#222"/></svg><div class="cb" style="left:530px;top:150px"></div><svg class="a" style="left:530px;top:150px" width="13" height="13" viewBox="0 0 13 13"><path d="M3 5L5.5 7.1L9.9 2.8V5.6L5.6 9.9L3 7.7Z" fill="#222"/></svg><div class="cb" style="left:530px;top:169px"></div><svg class="a" style="left:530px;top:169px" width="13" height="13" viewBox="0 0 13 13"><path d="M3 5L5.5 7.1L9.9 2.8V5.6L5.6 9.9L3 7.7Z" fill="#222"/></svg><div class="cb" style="left:530px;top:226px"></div><div class="cb" style="left:530px;top:245px"></div><div class="cb" style="left:530px;top:264px"></div><div class="cb" style="left:530px;top:283px"></div>
</body></html>
